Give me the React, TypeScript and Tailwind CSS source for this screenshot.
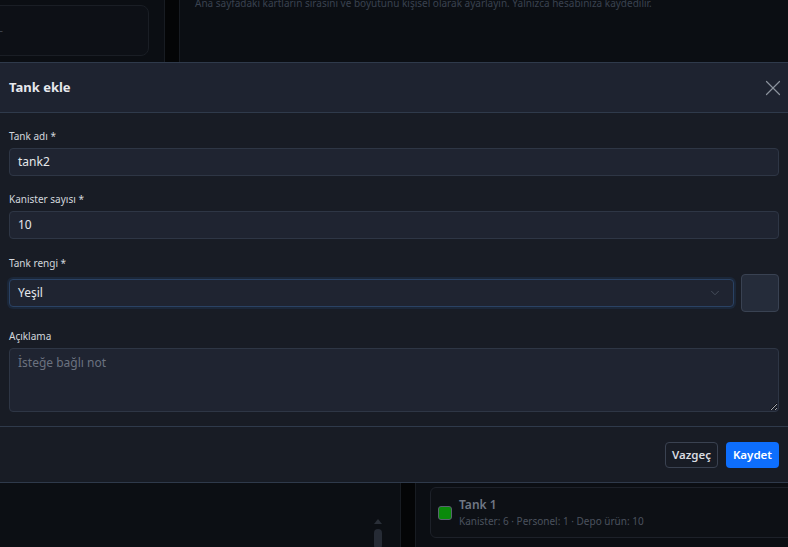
import { X, ChevronDown } from 'lucide-react';

function Field({ label, gap = 'mb-4', children }: { label: string; gap?: string; children: React.ReactNode }) {
  return (
    <div className={gap}>
      <label className="block text-[10px] leading-4 text-[#d3d7dd] mb-[4px]">{label}</label>
      {children}
    </div>
  );
}

export default function App() {
  return (
    <main
      className="h-[547px] w-[788px] overflow-hidden flex flex-col bg-[#0b0e13]"
      style={{ fontFamily: '"Noto Sans", "Open Sans", sans-serif' }}
    >
      {/* page behind, top part */}
      <div className="h-[62px] flex shrink-0">
        <div className="w-[165px] border-r border-[#181c22] pt-[5px] pr-[15px]">
          <div className="h-[51px] -ml-2 rounded-lg border border-[#1a1e25] bg-[#0d1016] flex items-center">
            <span className="text-[#3a414c] text-xs ml-1">–</span>
          </div>
        </div>
        <div className="w-[14px] bg-[#040506]" />
        <div className="flex-1 border-l border-[#181c22] pl-[15px] -mt-[5px]">
          <p className="text-[10px] leading-4 text-[#3a4250] whitespace-nowrap">
            Ana sayfadaki kartların sırasını ve boyutunu kişisel olarak ayarlayın. Yalnızca hesabınıza kaydedilir.
          </p>
        </div>
      </div>

      {/* modal */}
      <section className="shrink-0 border-y border-[#2f3a4b] bg-[#181c25]">
        <header className="h-[50px] flex items-center justify-between pl-[9px] pr-[2px] bg-[#1e2330] border-b border-[#2f3a4b]">
          <h2 className="text-[13px] font-bold text-[#e6e8ec] pt-[1px]">Tank ekle</h2>
          <X className="w-[26px] h-[26px] text-[#8b929c]" strokeWidth={1.1} />
        </header>

        <div className="px-[9px] pt-[15px] h-[314px] border-b border-[#2f3a4b]">
          <Field label="Tank adı *" gap="mb-[15px]">
            <div className="h-[28px] rounded border border-[#2e3645] bg-[#1f2431] flex items-center px-[8px] text-[12px] text-[#e5e7eb]">
              tank2
            </div>
          </Field>
          <Field label="Kanister sayısı *">
            <div className="h-[28px] rounded border border-[#2e3645] bg-[#1f2431] flex items-center px-[8px] text-[12px] text-[#e5e7eb]">
              10
            </div>
          </Field>
          <div className="mb-4">
            <label className="block text-[10px] leading-4 text-[#d3d7dd] mb-[3px]">Tank rengi *</label>
            <div className="flex items-center gap-[7px]">
              <div className="flex-1 h-[28px] rounded border border-[#2a4264] shadow-[0_0_0_2px_rgba(37,70,120,0.25)] bg-[#1f2431] flex items-center justify-between pl-[8px] pr-[11px] text-[12px] text-[#e5e7eb]">
                <span>Yeşil</span>
                <ChevronDown className="w-[14px] h-[14px] text-[#4a5260]" strokeWidth={1.5} />
              </div>
              <div className="w-[38px] h-[38px] rounded border border-[#394252] bg-[#252c3a]" />
            </div>
          </div>
          <Field label="Açıklama">
            <textarea
              placeholder="İsteğe bağlı not"
              className="block w-full h-[64px] rounded border border-[#2e3645] bg-[#1f2431] px-[8px] py-[5px] text-[12px] text-[#e5e7eb] placeholder:text-[#6b7280] outline-none"
            />
          </Field>
        </div>

        <footer className="h-[55px] flex items-center justify-end gap-[8px] px-[9px]">
          <button className="h-[26px] px-[6px] rounded border border-[#3a4251] text-[11.5px] font-semibold text-[#d8dbe0]">
            Vazgeç
          </button>
          <button className="h-[26px] px-[7px] rounded bg-[#0d6efd] text-[11.5px] font-semibold text-white">
            Kaydet
          </button>
        </footer>
      </section>

      {/* page behind, bottom part */}
      <div className="flex-1 flex">
        <div className="w-[401px] border-r border-[#181c22] bg-[#0c0f14] flex justify-end pr-[18px]">
          <div className="flex flex-col items-center pt-[36px]">
            <div className="w-0 h-0 border-x-[4px] border-x-transparent border-b-[5px] border-b-[#2a2f38]" />
            <div className="w-[8px] h-[20px] mt-[5px] rounded-full bg-[#262b35]" />
          </div>
        </div>
        <div className="w-[14px] bg-[#040506]" />
        <div className="flex-1 border-l border-[#181c22] pl-[14px] pt-[4px]">
          <div className="h-[51px] -mr-4 rounded-md border border-[#1d2129] bg-[#0d1015] flex items-center gap-[7px] pl-[7px] pt-[1px]">
            <div className="w-[14px] h-[14px] rounded-[3px] bg-[#0a8a0a] border border-[#5a6270]" />
            <div>
              <div className="text-[12px] leading-4 font-semibold text-[#707784]">Tank 1</div>
              <div className="text-[10px] leading-4 text-[#4b525e]">Kanister: 6 · Personel: 1 · Depo ürün: 10</div>
            </div>
          </div>
        </div>
      </div>
    </main>
  );
}
